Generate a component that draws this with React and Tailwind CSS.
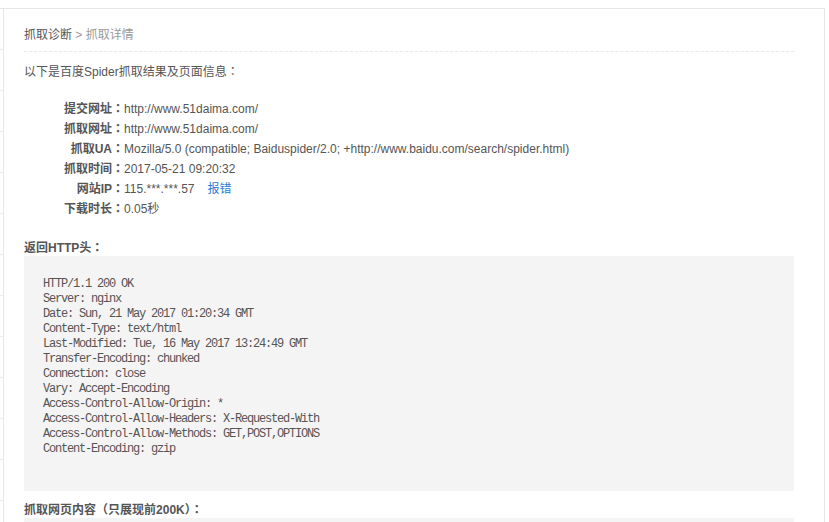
export default function App() {
  const C = ({ children }) => <span className="font-['Noto_Sans_CJK_TC',sans-serif] leading-[0]">{children}</span>;
  const rows = [
    ["提交网址", "http://www.51daima.com/"],
    ["抓取网址", "http://www.51daima.com/"],
    ["抓取UA", "Mozilla/5.0 (compatible; Baiduspider/2.0; +http://www.baidu.com/search/spider.html)"],
    ["抓取时间", "2017-05-21 09:20:32"],
    ["网站IP", "115.***.***.57", true],
    ["下载时长", "0.05秒"],
  ];
  const headers = [
    "HTTP/1.1 200 OK",
    "Server: nginx",
    "Date: Sun, 21 May 2017 01:20:34 GMT",
    "Content-Type: text/html",
    "Last-Modified: Tue, 16 May 2017 13:24:49 GMT",
    "Transfer-Encoding: chunked",
    "Connection: close",
    "Vary: Accept-Encoding",
    "Access-Control-Allow-Origin: *",
    "Access-Control-Allow-Headers: X-Requested-With",
    "Access-Control-Allow-Methods: GET,POST,OPTIONS",
    "Content-Encoding: gzip",
  ];
  return (
    <div className="w-[829px] h-[522px] overflow-hidden bg-white font-['Liberation_Sans','Noto_Sans_CJK_SC',sans-serif] text-[12px] text-[#555]">
      <div className="mt-[8px] w-[825px] h-[600px] border-t border-r border-[#e6e6e6] flex">
        <div className="w-[4px] shrink-0 border-r border-[#e6e6e6] flex flex-col">
          {Array.from({ length: 14 }).map((_, i) => (
            <div key={i} className="h-[41px] border-b border-[#ececec]" />
          ))}
        </div>
        <div className="flex-1 pl-[20px] pr-[30px]">
          <div className="pt-[16px] pb-[6px] border-b border-dashed border-[#e8e8e8] h-[43px] leading-[20px]">
            <span className="text-[#555]">抓取诊断</span>
            <span className="text-[#999]"> &gt; 抓取详情</span>
          </div>
          <div className="mt-[10px] h-[20px] leading-[20px]">以下是百度Spider抓取结果及页面信息<C>：</C></div>
          <div className="mt-[17px] flex flex-col">
            {rows.map(([k, v, link]) => (
              <div key={k} className="flex h-[20px] leading-[20px]">
                <div className="w-[100px] shrink-0 text-right font-bold">{k}<C>：</C></div>
                <div className="whitespace-nowrap">
                  {v}
                  {link && <a className="ml-[13px] text-[#2b7bd6]">报错</a>}
                </div>
              </div>
            ))}
          </div>
          <div className="mt-[19px] h-[18px] leading-[21px] font-bold">返回HTTP头<C>：</C></div>
          <div className="h-[235px] bg-[#f4f4f4] pt-[21px] pl-[19px] font-['Liberation_Mono',monospace] text-[12px] tracking-[-1.2px] leading-[15px] text-[#555]">
            {headers.map((h) => (
              <div key={h} className="whitespace-pre">{h}</div>
            ))}
          </div>
          <div className="mt-[9px] h-[18px] leading-[20px] font-bold">抓取网页内容<C>（</C>只展现前200K<C>）：</C></div>
          <div className="h-[100px] bg-[#f4f4f4]" />
        </div>
      </div>
    </div>
  );
}
